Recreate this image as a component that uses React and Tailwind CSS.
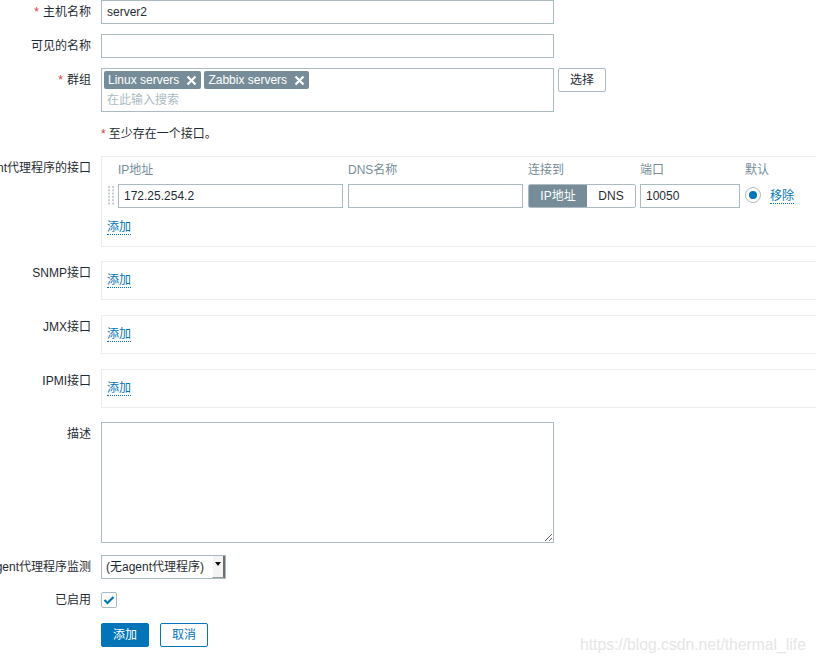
import React from "react";

const FONT = { fontFamily: '"Liberation Sans", Arial, "Noto Sans CJK SC", sans-serif' };

function Label({ children, required, align = "top" }) {
  return (
    <div className={`w-[91px] shrink-0 flex justify-end whitespace-nowrap text-[12px] text-[#1f2c33] ${align === "center" ? "items-center leading-4" : "items-start leading-6"}`}>
      {required && <span className="text-[#e33734] mr-[4px]">*</span>}
      <span>{children}</span>
    </div>
  );
}

function Row({ label, required, className = "", align, children }) {
  return (
    <div className={`flex gap-[10px] ${align === "center" ? "items-center" : "items-start"} ${className}`}>
      <Label required={required} align={align}>{label}</Label>
      {children}
    </div>
  );
}

function LinkAdd() {
  return (
    <span className="text-[12px] leading-[18px] text-[#0275b8] border-b border-dotted border-[#0275b8]">添加</span>
  );
}

function Tag({ children }) {
  return (
    <span className="flex items-center h-[18px] bg-[#768d99] text-white text-[12px] leading-[18px] rounded-[2px] pl-[4px] pr-[4px] gap-[7px]">
      {children}
      <svg width="11" height="11" viewBox="0 0 11 11">
        <path d="M1.5 1.5 L9.5 9.5 M9.5 1.5 L1.5 9.5" stroke="white" strokeWidth="2.2" />
      </svg>
    </span>
  );
}

function Handle() {
  const dots = [];
  for (let r = 0; r < 6; r++) {
    for (let c = 0; c < 2; c++) {
      dots.push(<rect key={`${r}-${c}`} x={c * 4} y={r * 3.3} width="2" height="2" fill="#c6cfd4" />);
    }
  }
  return (
    <svg width="6" height="20" viewBox="0 0 6 20" className="mt-[2px] block">
      {dots}
    </svg>
  );
}

export default function App() {
  const input = "h-6 border border-[#acbbc2] bg-white text-[12px] text-[#1f2c33] px-[5px] flex items-center";
  const ifaceBox = "w-[730px] shrink-0 h-[39px] border border-[#ebeef0] pl-[5px] pt-[9px] text-[12px] leading-[18px]";
  return (
    <div className="relative w-[816px] h-[661px] overflow-hidden bg-white" style={FONT}>
      {/* Row 1 */}
      <Row label="主机名称" required>
        <div className={`${input} w-[453px]`}>server2</div>
      </Row>
      {/* Row 2 */}
      <Row label="可见的名称" className="mt-[10px]">
        <div className={`${input} w-[453px]`}></div>
      </Row>
      {/* Row 3 */}
      <Row label="群组" required className="mt-[10px]">
        <div className="w-[453px] h-[44px] border border-[#acbbc2] pt-[2px] px-[2px]">
          <div className="flex gap-[3px]">
            <Tag>Linux servers</Tag>
            <Tag>Zabbix servers</Tag>
          </div>
          <div className="mt-[2px] h-[18px] leading-[18px] pl-[3px] text-[12px] text-[#acbbc2]">在此输入搜索</div>
        </div>
        <button className="-ml-[6px] h-6 w-[48px] border border-[#acbbc2] rounded-[2px] bg-white text-[12px] text-[#1f2c33]">选择</button>
      </Row>
      {/* Row 4 */}
      <Row label="" className="mt-[10px]">
        <div className="h-6 flex items-center text-[12px] text-[#1f2c33]">
          <span className="text-[#e33734] mr-[3px]">*</span>至少存在一个接口。
        </div>
      </Row>
      {/* Row 5 Agent */}
      <Row label="Agent代理程序的接口" className="mt-[10px]">
        <div className="w-[730px] shrink-0 h-[91px] border border-[#ebeef0] pl-[5px] pt-[4px] text-[12px] leading-[18px]">
          <div className="flex text-[#768d99]">
            <div className="w-[11px]" />
            <div className="w-[230px]">IP地址</div>
            <div className="w-[180px]">DNS名称</div>
            <div className="w-[112px]">连接到</div>
            <div className="w-[105px]">端口</div>
            <div>默认</div>
          </div>
          <div className="flex mt-[5px] items-start h-6">
            <div className="w-[11px] pl-[1px]"><Handle /></div>
            <div className={`${input} w-[225px] mr-[5px]`}>172.25.254.2</div>
            <div className={`${input} w-[175px] mr-[5px]`}></div>
            <div className="flex h-6 w-[108px] mr-[4px] rounded-[2px] overflow-hidden border border-[#acbbc2]">
              <div className="w-[58px] bg-[#768d99] text-white flex items-center justify-center">IP地址</div>
              <div className="flex-1 bg-white text-[#1f2c33] flex items-center justify-center">DNS</div>
            </div>
            <div className={`${input} w-[100px] mr-[5px]`}>10050</div>
            <div className="mt-[3px] w-4 h-4 rounded-full border border-[#acbbc2] flex items-center justify-center mr-[9px]">
              <div className="w-2 h-2 rounded-full bg-[#0275b8]" />
            </div>
            <div className="mt-[3px] leading-[18px]">
              <span className="text-[#0275b8] border-b border-dotted border-[#0275b8]">移除</span>
            </div>
          </div>
          <div className="mt-[10px] h-[18px]"><LinkAdd /></div>
        </div>
      </Row>
      {/* SNMP */}
      <Row label="SNMP接口" className="mt-[14px]">
        <div className={ifaceBox}><LinkAdd /></div>
      </Row>
      <Row label="JMX接口" className="mt-[15px]">
        <div className={ifaceBox}><LinkAdd /></div>
      </Row>
      <Row label="IPMI接口" className="mt-[15px]">
        <div className={ifaceBox}><LinkAdd /></div>
      </Row>
      {/* Description */}
      <Row label="描述" className="mt-[14px]">
        <textarea className="block w-[453px] h-[121px] border border-[#acbbc2] text-[12px] outline-none" style={FONT} />
      </Row>
      {/* Proxy */}
      <Row label="由agent代理程序监测" className="mt-[12px]" align="center">
        <div className="h-6 w-[125px] border border-[#acbbc2] flex items-stretch text-[12px] text-[#1f2c33] bg-white">
          <div className="flex-1 flex items-center pl-[4px]">(无agent代理程序)</div>
          <div className="w-[13px] bg-[#f4f4f4] border-l border-l-white border-r-2 border-r-[#6d6d6d] border-b border-b-[#9a9a9a] flex justify-center pt-[6px]">
            <svg width="6" height="4" viewBox="0 0 6 4"><path d="M0 0 L6 0 L3 4 Z" fill="#111" /></svg>
          </div>
        </div>
      </Row>
      {/* Enabled */}
      <Row label="已启用" className="mt-[13px]" align="center">
        <div className="w-4 h-4 border border-[#acbbc2] rounded-[2px] flex items-center justify-center bg-white">
          <svg width="12" height="10" viewBox="0 0 12 10">
            <path d="M1.5 5 L4.5 8 L10.5 2" stroke="#0275b8" strokeWidth="2.2" fill="none" />
          </svg>
        </div>
      </Row>
      {/* Buttons */}
      <div className="flex mt-[15px] pl-[101px] gap-[11px]">
        <button className="h-6 w-[48px] bg-[#0275b8] text-white text-[12px] rounded-[2px] border border-[#0275b8]">添加</button>
        <button className="h-6 w-[48px] bg-white text-[#0275b8] text-[12px] rounded-[2px] border border-[#0275b8]">取消</button>
      </div>
      {/* Watermark */}
      <div className="absolute left-[580px] top-[633px] text-[15.7px] text-[#e6e6e6] whitespace-nowrap">https://blog.csdn.net/thermal_life</div>
    </div>
  );
}
